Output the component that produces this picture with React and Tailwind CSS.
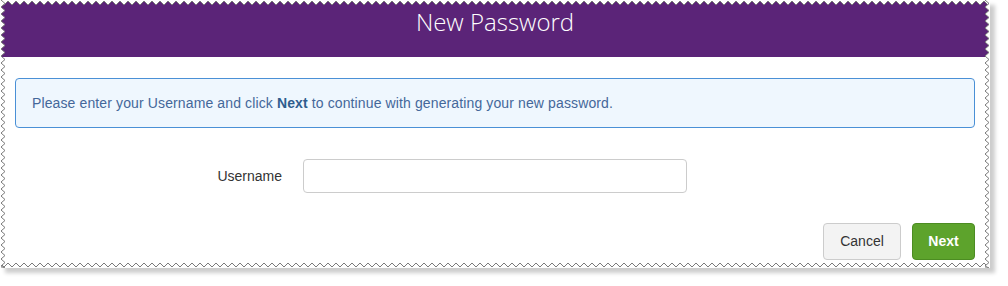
import React from "react";

function zig(len, period, amp, offset) {
  const pts = [];
  let i = 0;
  for (let p = 0; p <= len + period; p += period / 2) {
    pts.push([Math.min(p, len), i % 2 === 0 ? offset : offset + amp]);
    i++;
  }
  return pts;
}

function TopEdge() {
  const pts = zig(990, 8, 4, 1);
  const line = pts.map(([x, y]) => `${x},${y}`).join(" ");
  const poly = `0,0 ${line} 990,0`;
  return (
    <svg className="absolute left-0 top-0" width="990" height="6">
      <polygon points={poly} fill="#ffffff" />
      <polyline points={line} fill="none" stroke="#7b7b7b" strokeWidth="1" />
    </svg>
  );
}

function BottomEdge() {
  const pts = zig(990, 8, 4, 1);
  const line = pts.map(([x, y]) => `${x},${y}`).join(" ");
  const poly = `0,6 ${line} 990,6`;
  return (
    <svg className="absolute left-0 bottom-0" width="990" height="6">
      <polygon points={poly} fill="#ffffff" />
      <polyline points={line} fill="none" stroke="#7b7b7b" strokeWidth="1" />
    </svg>
  );
}

function SideEdge({ side }) {
  const pts = zig(268, 7, 4, 1).map(([a, b]) => [b, a]);
  const line = pts.map(([x, y]) => `${x},${y}`).join(" ");
  const poly =
    side === "left" ? `0,0 ${line} 0,268` : `6,0 ${line} 6,268`;
  return (
    <svg
      className={side === "left" ? "absolute left-0 top-0" : "absolute right-0 top-0"}
      width="6"
      height="268"
    >
      <polygon points={poly} fill="#ffffff" />
      <polyline points={line} fill="none" stroke="#7b7b7b" strokeWidth="1" />
    </svg>
  );
}

export default function App() {
  return (
    <div className="w-[1008px] h-[286px] bg-white overflow-hidden">
      <div
        className="relative w-[990px] h-[268px] bg-white shadow-[5px_5px_4px_rgba(0,0,0,0.2)]"
        style={{ fontFamily: '"Liberation Sans", Arial, sans-serif' }}
      >
        <div className="h-[57px] bg-[#5b2478] flex justify-center pt-[6px]">
          <h1
            className="text-white text-[24px] leading-[32px] font-light"
            style={{ fontFamily: '"Open Sans", sans-serif' }}
          >
            New Password
          </h1>
        </div>
        <div className="px-[15px] pt-[21px]">
          <div className="h-[50px] border border-[#4a90d6] bg-[#eff7fe] rounded-[4px] flex items-center pl-[16px] text-[14px] tracking-[0.12px] text-[#44679a]">
            <span>
              Please enter your Username and click{" "}
              <b className="font-bold text-[#2e5d8e]">Next</b> to continue with
              generating your new password.
            </span>
          </div>
          <div className="flex items-center mt-[31px]">
            <label className="w-[267px] text-right text-[14px] text-[#333333]">
              Username
            </label>
            <input
              type="text"
              className="ml-[21px] w-[384px] h-[34px] border border-[#cccccc] rounded-[4px] px-3 text-[14px] outline-none"
            />
          </div>
          <div className="flex justify-end gap-[11px] mt-[30px]">
            <button className="w-[78px] h-[37px] bg-[#f3f3f3] border border-[#cccccc] rounded-[4px] text-[14px] text-[#333333]">
              Cancel
            </button>
            <button className="w-[63px] h-[37px] bg-[#5da32c] border border-[#4c8c22] rounded-[4px] text-[14px] text-white font-bold">
              Next
            </button>
          </div>
        </div>
        <TopEdge />
        <BottomEdge />
        <SideEdge side="left" />
        <SideEdge side="right" />
      </div>
    </div>
  );
}
